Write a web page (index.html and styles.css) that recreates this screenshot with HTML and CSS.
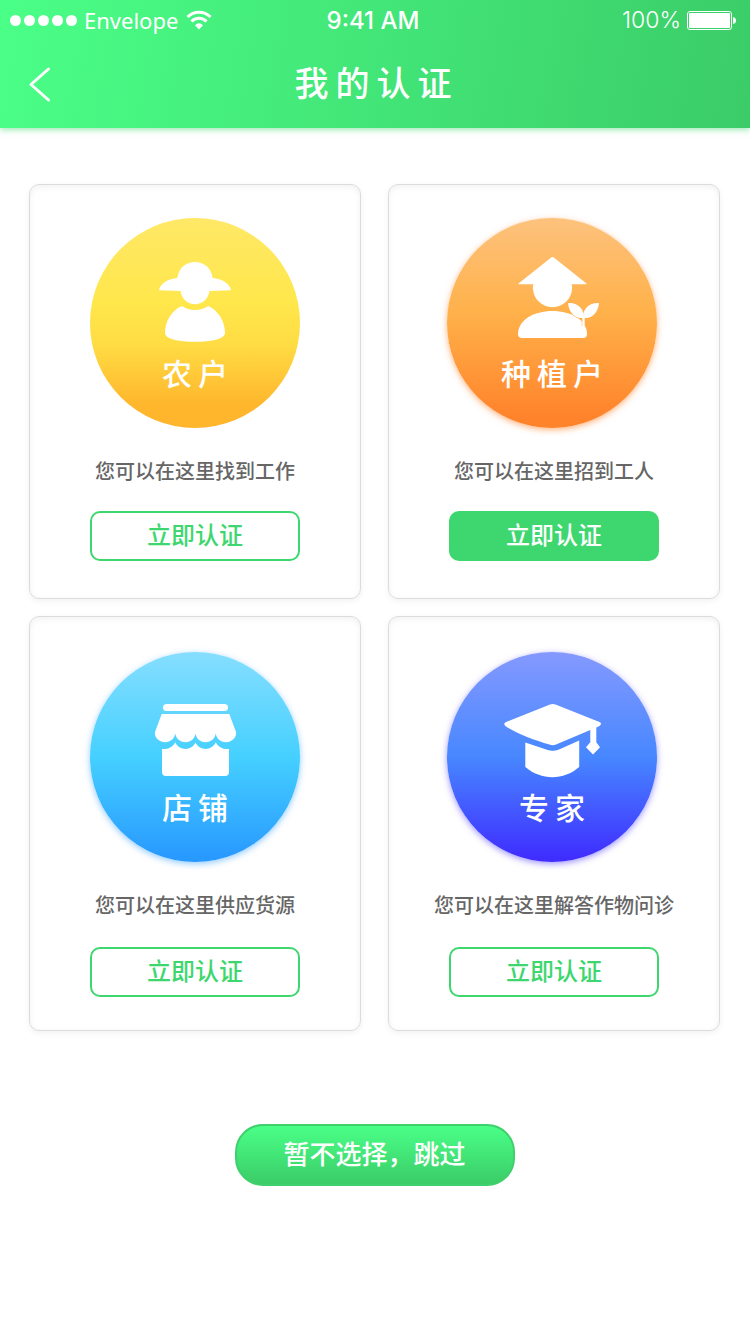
FILE: index.html
```html
<!DOCTYPE html>
<html lang="zh-CN">
<head>
<meta charset="utf-8">
<meta name="viewport" content="width=device-width, initial-scale=1">
<title>我的认证</title>
<link rel="stylesheet" href="styles.css">
</head>
<body>
<header class="header">
  <div class="status">
    <div class="status-left">
      <span class="signal"><i class="dot"></i><i class="dot"></i><i class="dot"></i><i class="dot"></i><i class="dot"></i></span>
      <span class="carrier">Envelope</span>
      <svg class="wifi" viewBox="0 0 26 20" aria-hidden="true">
        <path d="M1.500 7C8 0.500 18 0.500 24.500 7" fill="none" stroke="#fff" stroke-width="3"/>
        <path d="M5.500 11.500C9.500 7.200 16.500 7.200 20.500 11.500" fill="none" stroke="#fff" stroke-width="3"/>
        <path d="M13 19.500L8.900 15.200Q13 11.500 17.100 15.200Z" fill="#fff"/>
      </svg>
    </div>
    <span class="time">9:41 AM</span>
    <div class="status-right">
      <span class="percent">100%</span>
      <svg class="battery" viewBox="0 0 49 20" aria-hidden="true">
        <rect x="0.500" y="1.500" width="44" height="18" rx="2.500" fill="none" stroke="#fff"/>
        <rect x="2" y="3" width="41" height="15" rx="1" fill="#fff"/>
        <path d="M46 7Q49 7.500 49 10.500T46 14Z" fill="#fff"/>
      </svg>
    </div>
  </div>
  <div class="navbar">
    <button class="back" type="button" aria-label="返回">
      <svg class="back-icon" viewBox="0 0 22 36" aria-hidden="true"><path d="M19.500 3L2 18.500L19.500 34" fill="none" stroke="#fff" stroke-width="3" stroke-linecap="round" stroke-linejoin="round"/></svg>
    </button>
    <h1 class="title">我的认证</h1>
  </div>
</header>

<main class="content">
  <div class="cards">
    <section class="card">
      <div class="badge badge-farmer">
        <svg class="badge-icon" viewBox="0 0 110 100" aria-hidden="true">
          <path d="M19 40.300C20 33.500 29 28.500 37 28Q37.700 27.500 38 25C40 17 47 12 55 12S70 17 72 25Q72.300 27.500 73 28C81 28.500 90 33.500 91 40.300L69.500 41C68.500 49 62 54.300 55 54.300S41.500 49 40.500 41Z"/>
          <path d="M42 56Q47.500 60 55 60T68 56C78 60 85 71 85 83C85 89 71 91.800 55 91.800S25 89 25 83C25 71 32 60 42 56Z"/>
        </svg>
        <h2 class="badge-name">农户</h2>
      </div>
      <p class="desc">您可以在这里找到工作</p>
      <button class="verify" type="button">立即认证</button>
    </section>

    <section class="card">
      <div class="badge badge-grower">
        <svg class="badge-icon" viewBox="0 0 110 100" aria-hidden="true">
          <path d="M54.500 7.300Q55.500 6.500 56.500 7.300L89.500 33.500Q90 34.300 89 34.300H74.500C75.500 36 75 39 75 39C74.500 49 66 57.200 55.500 57.200S36.500 49 36 39C36 39 35.500 36 36.500 34.300H22Q20.500 34.300 21.500 33.500Z"/>
          <path d="M21 84C21 70 37 61 55.500 61S90 70 90 84Q90 88 86 88H25Q21 88 21 84Z"/>
          <path class="sprout" d="M71 53C80 52 85.500 58 86.500 63.500C87.500 58 93 52 102 53C101.500 61 96 69 87.700 68V76H85.300V68C77 69 71.500 61 71 53Z"/>
          <path d="M83 76H88V80H83Z"/>
        </svg>
        <h2 class="badge-name">种植户</h2>
      </div>
      <p class="desc">您可以在这里招到工人</p>
      <button class="verify verify-active" type="button">立即认证</button>
    </section>

    <section class="card card-low">
      <div class="badge badge-shop">
        <svg class="badge-icon" viewBox="0 0 110 100" aria-hidden="true">
          <rect x="23" y="20" width="65" height="7" rx="3.500"/>
          <path d="M21.700 30H89.300L96 48C97 53 92 58.200 86 58.200C80.500 58.200 76.500 54.500 75.700 49.500C75 54.500 71 58.200 65.500 58.200S56.300 54.500 55.500 49.500C54.700 54.500 51 58.200 45.500 58.200S36 54.500 35.300 49.500C34.500 54.500 30.500 58.200 25 58.200C19 58.200 14 53 15 48Z"/>
          <path d="M22 65Q31 66 35.300 58.500C39.500 67 51.500 67 55.500 58.500C59.500 67 71.500 67 75.700 58.500Q80 66 89 65V88Q89 92 85 92H26Q22 92 22 88Z"/>
        </svg>
        <h2 class="badge-name">店铺</h2>
      </div>
      <p class="desc">您可以在这里供应货源</p>
      <button class="verify" type="button">立即认证</button>
    </section>

    <section class="card card-low">
      <div class="badge badge-expert">
        <svg class="badge-icon" viewBox="0 0 110 100" aria-hidden="true">
          <path d="M53 20.500Q55.700 19.500 58.500 20.500L102.500 38Q105.500 39.500 102.500 42L99.300 43.500V58.300L103 63.300L96 70.500L89 63.300L93.300 58.300V46L59 60.500Q55.700 61.800 52.500 60.500C37 56 21 50 9 42.500Q5.500 39.800 9 38Z"/>
          <path d="M28.300 58.500L50 65.800Q56 68 62 65.500L82.200 56.500V83C67 96.500 44 96.500 28.300 83Z"/>
        </svg>
        <h2 class="badge-name">专家</h2>
      </div>
      <p class="desc">您可以在这里解答作物问诊</p>
      <button class="verify" type="button">立即认证</button>
    </section>
  </div>
  <button class="skip" type="button">暂不选择，跳过</button>
</main>
</body>
</html>
```
FILE: styles.css
```css
* {
  box-sizing: border-box;
}

body {
  margin: 0;
  background: #fff;
  color: #666;
  font-family: "Noto Sans CJK SC", sans-serif;
  font-weight: 500;
}

button {
  padding: 0;
  border: 0;
  background: none;
  font-family: inherit;
  font-weight: inherit;
  cursor: pointer;
}

h1,
h2,
p {
  margin: 0;
}

/* Header */
.header {
  background: linear-gradient(100deg, #4aff87, #3bcc68);
  box-shadow: 0 2px 6px rgba(62, 215, 111, 0.5);
  color: #fff;
}

.status {
  display: grid;
  grid-template-columns: 1fr auto 1fr;
  align-items: center;
  height: 40px;
  padding: 0 14px 0 10px;
  font-family: Inter, sans-serif;
  font-size: 24px;
}

.status-left,
.status-right {
  display: flex;
  align-items: center;
}

.status-right {
  justify-content: flex-end;
  gap: 6px;
}

.signal {
  display: flex;
  gap: 3px;
}

.dot {
  width: 11px;
  height: 11px;
  border-radius: 50%;
  background: #fff;
}

.carrier {
  margin: 0 8px 0 7px;
  font-family: "Noto Sans", sans-serif;
  font-size: 22px;
  font-weight: 400;
  line-height: 30px;
}

.wifi {
  width: 26px;
  height: 20px;
}

.time {
  font-weight: 500;
}

.percent {
  font-size: 23px;
  font-weight: 300;
}

.battery {
  width: 49px;
  height: 20px;
}

.navbar {
  display: grid;
  grid-template-columns: 60px 1fr 60px;
  align-items: center;
  height: 88px;
}

.back {
  display: flex;
  align-items: center;
  height: 88px;
  padding-left: 29px;
}

.back-icon {
  width: 22px;
  height: 36px;
}

.title {
  padding: 0 0 4px 3px;
  font-size: 34px;
  font-weight: 500;
  line-height: 48px;
  letter-spacing: 7px;
  text-align: center;
}

/* Cards */
.content {
  display: flex;
  flex-direction: column;
  align-items: center;
  padding: 56px 30px 40px 29px;
}

.cards {
  display: grid;
  grid-template-columns: 1fr 1fr;
  gap: 17px 27px;
  width: 100%;
}

.card {
  display: flex;
  flex-direction: column;
  align-items: center;
  padding: 33px 0 37px;
  border: 1px solid #dcdcdc;
  border-radius: 10px;
  box-shadow: 0 2px 6px rgba(0, 0, 0, 0.06), inset 0 2px 6px rgba(0, 0, 0, 0.06);
}

.card-low {
  padding: 35px 0 33px;
}

.badge {
  display: flex;
  flex-direction: column;
  align-items: center;
  width: 210px;
  height: 210px;
  padding-top: 32px;
  border-radius: 50%;
  color: #fff;
}

.card:nth-child(even) .badge {
  margin-right: 4px;
}

.badge-farmer {
  background: linear-gradient(#ffe866, #ffe74c 40%, #ffdc44 60%, #ffb52c 90%, #ffb52c);
}

.badge-grower {
  background: linear-gradient(#fdc27d, #ffb14a 45%, #ff832b 95%);
  box-shadow: 0 2px 6px rgba(255, 131, 43, 0.6);
}

.badge-shop {
  background: linear-gradient(#86deff, #45d0ff 50%, #2899ff 98%);
  box-shadow: 0 2px 6px rgba(40, 153, 255, 0.5);
}

.badge-expert {
  background: linear-gradient(#8599ff, #4787ff 50%, #3f2eff 98%);
  box-shadow: 0 2px 6px rgba(63, 46, 255, 0.5);
}

.badge-icon {
  width: 110px;
  height: 100px;
  fill: #fff;
}

.sprout {
  stroke: #ffac44;
  stroke-width: 1;
  paint-order: stroke;
}

.badge-name {
  margin-top: 2px;
  padding-left: 6px;
  font-size: 30px;
  font-weight: 500;
  line-height: 40px;
  letter-spacing: 6px;
}

.desc {
  margin: 28px 0 25px;
  font-size: 20px;
  line-height: 30px;
}

.card-low .desc {
  margin-bottom: 27px;
}

.verify {
  width: 210px;
  height: 50px;
  padding-bottom: 4px;
  border: 2px solid #3ed76f;
  border-radius: 10px;
  color: #3ed76f;
  font-size: 24px;
  line-height: 42px;
}

.verify-active {
  background: #3ed76f;
  color: #fff;
}

.skip {
  width: 280px;
  height: 62px;
  margin-top: 93px;
  padding-bottom: 4px;
  border: 2px solid #3ed06c;
  border-radius: 28px;
  background: linear-gradient(#4aff87, #3bcc68);
  color: #fff;
  font-size: 26px;
  line-height: 54px;
}
```
